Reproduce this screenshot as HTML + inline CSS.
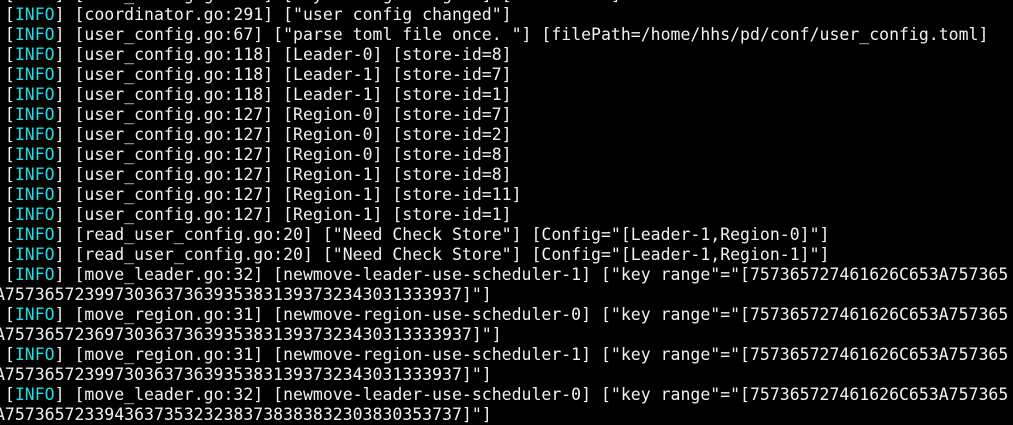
<!DOCTYPE html>
<html><head><meta charset="utf-8"><style>
html,body{margin:0;padding:0;background:#000;width:1013px;height:424px;overflow:hidden}
#t{position:absolute;left:-5px;top:-15px;font-family:"DejaVu Sans Mono","Liberation Mono",monospace;font-size:16.5px;line-height:20px;color:#f2f2f2}
#t div{height:20px;white-space:pre}
.c{color:#19e0e6}
</style></head><body><div id="t">
<div> [<span class="c">INFO</span>] [user_config.go:291] [key config changed"] [store-id=1]</div>
<div> [<span class="c">INFO</span>] [coordinator.go:291] ["user config changed"]</div>
<div> [<span class="c">INFO</span>] [user_config.go:67] ["parse toml file once. "] [filePath=/home/hhs/pd/conf/user_config.toml]</div>
<div> [<span class="c">INFO</span>] [user_config.go:118] [Leader-0] [store-id=8]</div>
<div> [<span class="c">INFO</span>] [user_config.go:118] [Leader-1] [store-id=7]</div>
<div> [<span class="c">INFO</span>] [user_config.go:118] [Leader-1] [store-id=1]</div>
<div> [<span class="c">INFO</span>] [user_config.go:127] [Region-0] [store-id=7]</div>
<div> [<span class="c">INFO</span>] [user_config.go:127] [Region-0] [store-id=2]</div>
<div> [<span class="c">INFO</span>] [user_config.go:127] [Region-0] [store-id=8]</div>
<div> [<span class="c">INFO</span>] [user_config.go:127] [Region-1] [store-id=8]</div>
<div> [<span class="c">INFO</span>] [user_config.go:127] [Region-1] [store-id=11]</div>
<div> [<span class="c">INFO</span>] [user_config.go:127] [Region-1] [store-id=1]</div>
<div> [<span class="c">INFO</span>] [read_user_config.go:20] ["Need Check Store"] [Config="[Leader-1,Region-0]"]</div>
<div> [<span class="c">INFO</span>] [read_user_config.go:20] ["Need Check Store"] [Config="[Leader-1,Region-1]"]</div>
<div> [<span class="c">INFO</span>] [move_leader.go:32] [newmove-leader-use-scheduler-1] ["key range"="[757365727461626C653A757365</div>
<div>A7573657239973036373639353831393732343031333937]"]</div>
<div> [<span class="c">INFO</span>] [move_region.go:31] [newmove-region-use-scheduler-0] ["key range"="[757365727461626C653A757365</div>
<div>A75736572369730363736393538313937323430313333937]"]</div>
<div> [<span class="c">INFO</span>] [move_region.go:31] [newmove-region-use-scheduler-1] ["key range"="[757365727461626C653A757365</div>
<div>A7573657239973036373639353831393732343031333937]"]</div>
<div> [<span class="c">INFO</span>] [move_leader.go:32] [newmove-leader-use-scheduler-0] ["key range"="[757365727461626C653A757365</div>
<div>A7573657233943637353232383738383832303830353737]"]</div>
</div></body></html>
